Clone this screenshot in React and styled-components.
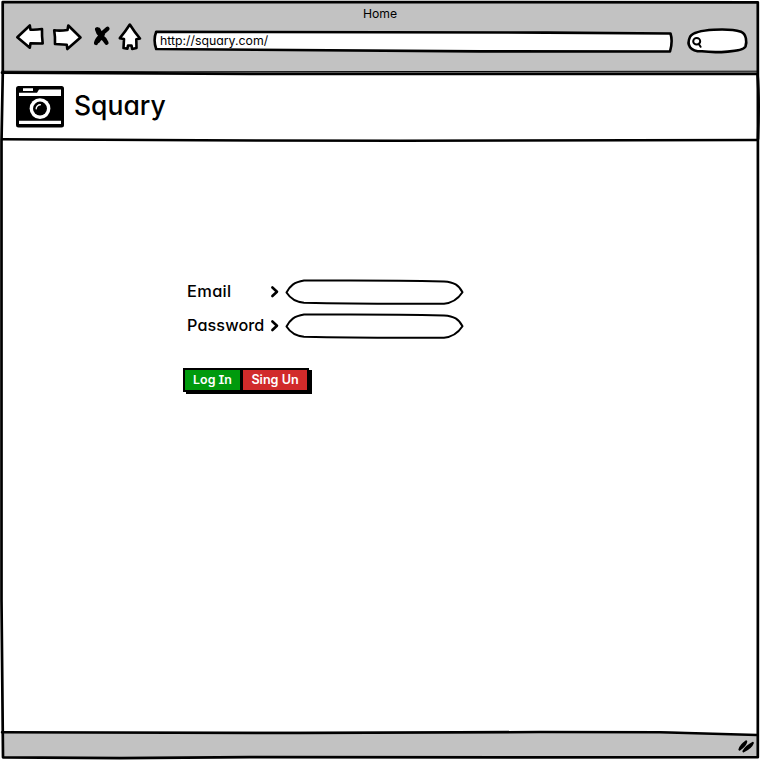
import React from "react";
import styled, { createGlobalStyle } from "styled-components";

const Global = createGlobalStyle`
  * { box-sizing: border-box; }
  body { margin: 0; background: #fff; }
`;

const Window = styled.div`
  position: relative;
  display: flex;
  flex-direction: column;
  width: 760px;
  height: 760px;
  overflow: hidden;
  background: #fff;
  color: #000;
  font-family: Inter, "Liberation Sans", sans-serif;
  font-feature-settings: "cv11";
`;

const Outline = styled.svg`
  position: absolute;
  inset: 0;
  pointer-events: none;
  fill: none;
  stroke: #000;
  stroke-linecap: round;
  stroke-linejoin: round;
`;

const Chrome = styled.header`
  height: 71px;
  margin: 2px 2px 0;
  background: #c2c2c2;
`;

const Title = styled.div`
  height: 24px;
  padding-left: 361px;
  line-height: 23px;
`;

const Label = styled.span`
  display: block;
  white-space: nowrap;
  width: max-content;
  font-size: ${(p) => p.$size}px;
  font-weight: ${(p) => p.$weight || 400};
  letter-spacing: ${(p) => p.$track || 0}px;
`;

const Navigation = styled.div`
  display: flex;
  height: 34px;
  margin-top: -6px;
  padding-left: 10px;
`;

const Icon = styled.svg`
  display: block;
  flex: none;
  fill: #fff;
  stroke: #000;
  stroke-width: ${(p) => p.$weight || 2.6};
  stroke-linejoin: round;
  stroke-linecap: round;
`;

const Address = styled.div`
  position: relative;
  display: flex;
  align-items: center;
  width: 522px;
  height: 26px;
  margin: 8px 0 0 6px;
  padding: 0 0 2px 8px;
`;

const Sketch = styled.svg`
  position: absolute;
  inset: 0;
  fill: #fff;
  stroke: #000;
  stroke-width: 2.6;
  stroke-linejoin: round;
`;

const Text = styled(Label)`
  position: relative;
`;

const Search = styled(Icon)`
  margin: 7px 0 0 11px;
`;

const Brand = styled.div`
  display: flex;
  height: 67px;
  padding: 13px 0 0 16px;
`;

const BrandName = styled.h1`
  margin: 1px 0 0 10px;
  font-weight: 400;
  line-height: 36px;
`;

const Main = styled.main`
  flex: 1;
  padding: 138px 0 0 183px;
`;

const Field = styled.div`
  display: grid;
  grid-template-columns: 83px 15px 180px;
  align-items: center;
  height: 28px;
  padding-left: 4px;
  margin-bottom: 6px;
`;

const FieldLabel = styled(Label)`
  margin-top: -2px;
`;

const Buttons = styled.div`
  display: flex;
  height: 25px;
  margin-top: 28px;
`;

const Button = styled.button`
  width: ${(p) => p.$width}px;
  height: 24px;
  margin: 0 ${(p) => (p.$joined ? -2 : 0)}px 0 0;
  padding: 0 0 1px;
  display: flex;
  align-items: center;
  justify-content: center;
  border: 2px solid #000;
  border-right-width: ${(p) => (p.$joined ? 3 : 2)}px;
  background: ${(p) => p.$color};
  box-shadow: 3px 2px 0 #000;
  color: #fff;
  font-family: inherit;
  font-feature-settings: "cv11", "cv08", "ss02";
`;

const Status = styled.footer`
  display: flex;
  justify-content: flex-end;
  height: 27px;
  margin: 0 2px 2px;
  background: #c2c2c2;
  clip-path: polygon(0 0, 87% 0, 100% 4px, 100% 100%, 0 100%);
`;

const Input = () => (
  <Icon width="180" height="28" viewBox="0 0 180 28" $weight={2}>
    <path d="M1.5 14.5C5 8 9 4 19 2.5C54 2.5 91 1.8 159 3.4C169 4 174 7 177.5 14.3C173 21 168 25 159 25.7C105 26 66 25.9 19 24.7C10 24 5 20 1.5 14.5Z" />
  </Icon>
);

const Chevron = () => (
  <Icon width="10" height="14" viewBox="0 0 10 14">
    <path d="M2.4 2.5L7 6.7L2.4 11" fill="none" />
  </Icon>
);

export default function App() {
  return (
    <>
      <Global />
      <Window>
        <Chrome>
          <Title><Label $size={12.2} $weight={430}>Home</Label></Title>
          <Navigation>
            <Icon width="37" height="34" viewBox="12 20 37 34">
              <path d="M17.3 37.3L29.8 25.5L30.5 29.7Q36 30 42 29Q41.8 36 42.7 43.5L30.5 43.3L29.8 47.8Z" />
            </Icon>
            <Icon width="40" height="34" viewBox="49 20 40 34">
              <path d="M54.2 30.3Q60 31 67.5 30L68.3 25.5L80.5 37.5L67.3 49L66.8 44.8L55 44Q55.3 37 54.2 30.3Z" />
            </Icon>
            <Icon width="27" height="34" viewBox="89 20 27 34" $weight={4.2}>
              <path d="M97 29.2Q98 33.5 101 36Q105 39 106.5 42.8M107.5 28.8Q103 32 101 36Q97 39 96 43M98.5 29.8L103 38.5M106 42L100.5 34.5M98 41L103 34" fill="none" />
            </Icon>
            <Icon width="30" height="34" viewBox="116 20 30 34">
              <path d="M129.8 24.5Q125 32 119.8 38.2L124 39L123.5 48L127.4 48.8L128 45.5H131.5L132.2 49L136.5 48L136.3 39.2L140 38.5Q134.5 32 129.8 24.5Z" />
            </Icon>
            <Address>
              <Sketch width="522" height="26" viewBox="152 28 522 26">
                <path d="M156.2 31.8C310 32 495 31.8 670.5 33.5Q673 41 670 51.5C500 51.8 315 51 156.2 49Q153 40 156.2 31.8Z" />
              </Sketch>
              <Text $size={12.3} $weight={430}>http://squary.com/</Text>
            </Address>
            <Search width="65" height="28" viewBox="685 27 65 28">
              <path d="M690.2 36.5C696 28.4 730 28.3 741 31.8C746.5 34 747 42 745.5 46.5C743 52 715 53 702 51.3C690 51.5 686 45 690.2 36.5Z" />
              <path d="M693.2 41.2A3.5 3.3 0 1 1 700.2 41.2A3.5 3.3 0 1 1 693.2 41.2M698.6 43.8L700.6 46.8" fill="none" strokeWidth="2" />
            </Search>
          </Navigation>
        </Chrome>
        <Brand>
          <Icon width="48" height="43" viewBox="16 86 48 43" $weight={1.4}>
            <g stroke="none">
              <rect x="16" y="86" width="48" height="41.5" rx="2.5" fill="#000" />
              <path d="M23 88.2H33V91H23ZM19 92.7H37L39 89.4H61V96H19ZM19 120.8H61V124H19Z" />
              <circle cx="40" cy="108.6" r="10.4" />
              <circle cx="40" cy="108.6" r="7" fill="#000" />
            </g>
            <path d="M36.2 108.8A4 4 0 0 1 40.3 104.8" stroke="#fff" fill="none" />
          </Icon>
          <BrandName><Label $size={26.5} $weight={450}>Squary</Label></BrandName>
        </Brand>
        <Main>
          <Field><FieldLabel $size={16.4} $weight={450} $track={0.35}>Email</FieldLabel><Chevron /><Input /></Field>
          <Field><FieldLabel $size={16.2} $weight={450} $track={0.1}>Password</FieldLabel><Chevron /><Input /></Field>
          <Buttons>
            <Button $width={60} $color="#009a0d" $joined><Label $size={12.4} $weight={600}>Log In</Label></Button>
            <Button $width={68} $color="#d12b2b"><Label $size={12.6} $weight={600}>Sing Un</Label></Button>
          </Buttons>
        </Main>
        <Status>
          <Icon width="22" height="26" viewBox="736 732 22 26" $weight={2.2}>
            <path d="M739.5 750.5Q741 746 746.2 742.5Q745.5 746.5 739.5 750.5M743.5 752.3Q746 747.5 752.8 744Q751 749 743.5 752.3" fill="#000" />
          </Icon>
        </Status>
        <Outline width="760" height="760" viewBox="0 0 760 760">
          <path strokeWidth="2.7" d="M2.7 2L757.8 2.3L758 300L757.8 757.2L520 757.4L250 757.2L120 758.2L3 757.3L1.5 600L1.5 142L2.8 72Z" />
          <path strokeWidth="2.7" d="M2 72.7L250 73.8L757.5 73.8Q759.5 98 758 139" />
          <path strokeWidth="1" d="M2 71.2L170 71.8L757 71.2" />
          <path strokeWidth="2.5" d="M2 139.3L200 140.3L400 140.8L757 140" />
          <path strokeWidth="2.5" d="M2 732.3L300 733L540 732L660 732.2L757 735" />
        </Outline>
      </Window>
    </>
  );
}
